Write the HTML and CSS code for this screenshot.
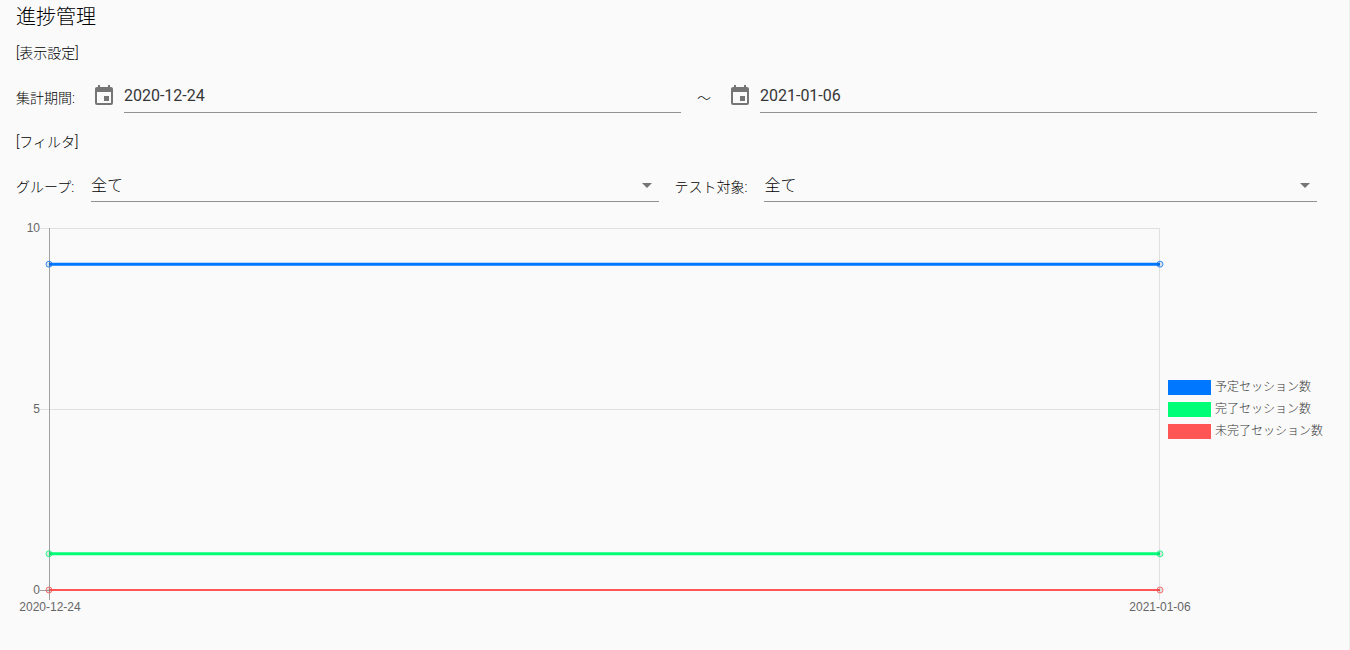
FILE: index.html
```html
<!DOCTYPE html>
<html lang="ja">
<head>
<meta charset="utf-8">
<meta name="viewport" content="width=device-width, initial-scale=1">
<title>進捗管理</title>
<link rel="stylesheet" href="styles.css">
</head>
<body>
<main class="page">
  <h1 class="title">進捗管理</h1>

  <h2 class="section">[表示設定]</h2>
  <div class="row">
    <div class="group">
      <label class="label" for="from">集計期間:</label>
      <div class="date">
        <svg class="icon" viewBox="0 0 24 24" aria-hidden="true"><path d="M19,19H5V8H19M16,1V3H8V1H6V3H5C3.89,3 3,3.89 3,5V19A2,2 0 0,0 5,21H19A2,2 0 0,0 21,19V5C21,3.89 20.1,3 19,3H18V1M17,12H12V17H17V12Z"/></svg>
        <input class="field" id="from" type="text" value="2020-12-24" readonly>
      </div>
      <span class="label">～</span>
      <div class="date">
        <svg class="icon" viewBox="0 0 24 24" aria-hidden="true"><path d="M19,19H5V8H19M16,1V3H8V1H6V3H5C3.89,3 3,3.89 3,5V19A2,2 0 0,0 5,21H19A2,2 0 0,0 21,19V5C21,3.89 20.1,3 19,3H18V1M17,12H12V17H17V12Z"/></svg>
        <input class="field" id="to" type="text" value="2021-01-06" aria-label="集計期間の終了日" readonly>
      </div>
    </div>
  </div>

  <h2 class="section">[フィルタ]</h2>
  <div class="row">
    <div class="group">
      <label class="label" for="group">グループ:</label>
      <div class="select"><select class="field" id="group"><option>全て</option></select></div>
    </div>
    <div class="group">
      <label class="label" for="target">テスト対象:</label>
      <div class="select"><select class="field" id="target"><option>全て</option></select></div>
    </div>
  </div>

  <section class="chart" aria-label="セッション数の推移">
    <svg class="plot" role="img" aria-label="セッション数の折れ線グラフ">
      <g class="grid">
        <line x1="-9" y1="0" x2="100%" y2="0"/>
        <line x1="-9" y1="50%" x2="100%" y2="50%"/>
        <line x1="100%" y1="0" x2="100%" y2="372"/>
      </g>
      <g class="axis">
        <line x1="0" y1="0" x2="0" y2="372"/>
        <line x1="-9" y1="100%" x2="100%" y2="100%"/>
      </g>
      <g class="tick tick-y">
        <text x="-9" y="4">10</text>
        <text x="-9" y="50%" dy="4">5</text>
        <text x="-9" y="100%" dy="4">0</text>
      </g>
      <g class="tick tick-x">
        <text x="1" y="383">2020-12-24</text>
        <text x="100%" y="383">2021-01-06</text>
      </g>
      <g class="series unfinished">
        <line x1="0" y1="100%" x2="100%" y2="100%"/>
        <circle cx="0" cy="100%" r="3"/><circle cx="100%" cy="100%" r="3"/>
      </g>
      <g class="series finished">
        <line x1="0" y1="90%" x2="100%" y2="90%"/>
        <circle cx="0" cy="90%" r="3"/><circle cx="100%" cy="90%" r="3"/>
      </g>
      <g class="series planned">
        <line x1="0" y1="10%" x2="100%" y2="10%"/>
        <circle cx="0" cy="10%" r="3"/><circle cx="100%" cy="10%" r="3"/>
      </g>
    </svg>
    <ul class="legend">
      <li class="legend-item planned"><span class="swatch"></span>予定セッション数</li>
      <li class="legend-item finished"><span class="swatch"></span>完了セッション数</li>
      <li class="legend-item unfinished"><span class="swatch"></span>未完了セッション数</li>
    </ul>
  </section>
</main>
</body>
</html>
```
FILE: styles.css
```css
* { box-sizing: border-box; }

body {
  margin: 0;
  background: #fafafa;
  color: #000000;
  font-family: Roboto, "Noto Sans CJK JP", sans-serif;
  font-size: 14px;
  font-weight: 300;
  line-height: 20px;
}

.page {
  min-height: 100vh;
  padding: 0 32px 0 16px;
  border-right: 1px solid #eeeeee;
}

.title {
  margin: 0;
  padding-top: 2px;
  font-size: 20px;
  font-weight: 300;
  line-height: 30px;
}

.section {
  margin: 0;
  padding: 11px 0 17px;
  font-size: 14px;
  font-weight: 300;
}

.row {
  display: flex;
  gap: 16px;
  margin-bottom: 8px;
}

.group {
  display: flex;
  flex: 1 1 0;
  align-items: center;
  gap: 16px;
}

.label {
  flex: none;
  padding: 2px 1px 0 0;
}

.date {
  display: flex;
  flex: 1 1 0;
  align-items: center;
  gap: 8px;
}

.icon {
  flex: none;
  width: 24px;
  height: 24px;
  margin-bottom: 2px;
  fill: #757575;
}

.select {
  position: relative;
  flex: 1 1 0;
}

.select::after {
  content: "";
  position: absolute;
  top: 14px;
  right: 7px;
  border: 5px solid transparent;
  border-top-color: #757575;
  border-bottom: 0;
  pointer-events: none;
}

.field {
  display: block;
  width: 100%;
  min-width: 0;
  height: 33px;
  padding: 0;
  border: 0;
  border-bottom: 1px solid #919191;
  border-radius: 0;
  outline: 0;
  appearance: none;
  background: transparent;
  color: #363636;
  font-family: inherit;
  font-size: 16px;
  font-weight: 400;
}

.date .field { padding-bottom: 2px; }

select.field {
  color: #000000;
  font-weight: 300;
}

.chart {
  display: flex;
  align-items: center;
  gap: 8px;
  margin: 26px -6px 0 33px;
}

.plot {
  flex: 1 1 0;
  min-width: 0;
  height: 362px;
  overflow: visible;
}

.grid line { stroke: #e0e0e0; shape-rendering: crispEdges; }
.axis line { stroke: #a0a0a0; shape-rendering: crispEdges; }

.tick {
  fill: #666666;
  font-family: "Liberation Sans", Arial, sans-serif;
  font-size: 12px;
  font-weight: 400;
}

.tick-y { text-anchor: end; }
.tick-x { text-anchor: middle; }

.planned { --series: #0077ff; }
.finished { --series: #00ff77; }
.unfinished { --series: #ff5555; }

.series line { stroke: var(--series); stroke-width: 3; }
.series.unfinished line { stroke-width: 2; }

.series circle {
  fill: rgba(0, 0, 0, 0.1);
  stroke: var(--series);
  stroke-opacity: 0.8;
}

.legend {
  flex: none;
  margin: 0;
  padding: 0;
  list-style: none;
}

.legend-item {
  display: flex;
  align-items: center;
  gap: 4px;
  height: 22px;
  color: #333333;
  font-family: "Liberation Sans", "Noto Sans CJK JP", sans-serif;
  font-size: 12px;
}

.swatch {
  width: 43px;
  height: 15px;
  background: var(--series);
}
```
